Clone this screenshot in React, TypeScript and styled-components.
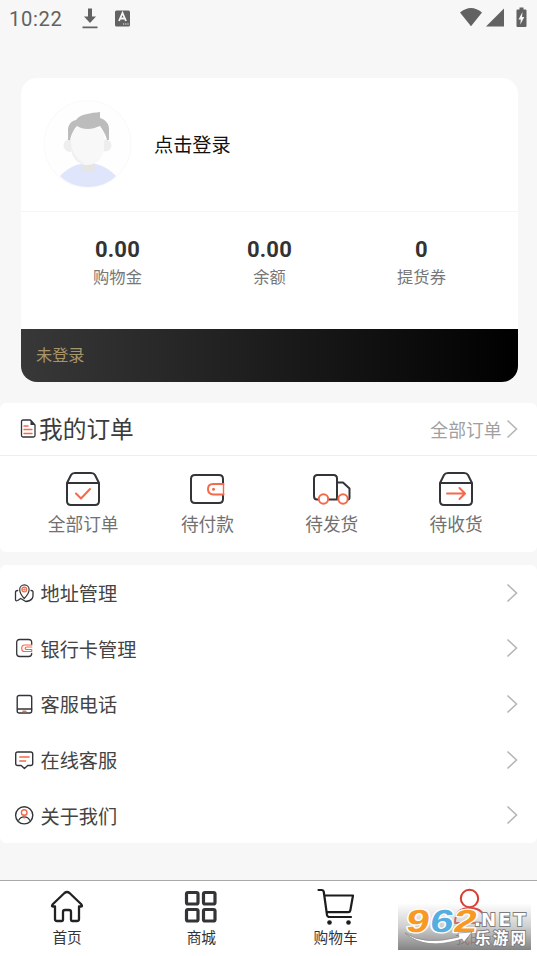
import React from "react";
import styled, { createGlobalStyle } from "styled-components";

const INK = "#333438";
const ACCENT = "#f4694a";

const GlobalStyle = createGlobalStyle`
  * { box-sizing: border-box; }
  body {
    margin: 0;
    background: #f7f7f7;
    color: #333;
    font-family: Roboto, "Noto Sans CJK SC", sans-serif;
    overflow: hidden;
  }
  svg { display: block; flex: none; overflow: visible; }
`;

const Screen = styled.div`
  width: 537px;
  height: 956px;
  display: flex;
  flex-direction: column;
  overflow: hidden;
`;

const StatusBar = styled.header`
  height: 78px;
  flex: none;
  display: flex;
  align-items: flex-start;
  padding: 7px 9px 0;
  color: #626262;
`;

const Clock = styled.span`
  font-size: 20.2px;
  line-height: 24px;
  letter-spacing: 0.65px;
  width: 72px;
`;

const StatusIcons = styled.div<{ $end?: boolean }>`
  display: flex;
  margin-left: ${(p) => (p.$end ? "auto" : "0")};
`;

const ProfileCard = styled.section`
  height: 304px;
  flex: none;
  margin: 0 19px 0 21px;
  background: #fff;
  border-radius: 16px;
  overflow: hidden;
  display: flex;
  flex-direction: column;
`;

const LoginRow = styled.div`
  height: 134px;
  flex: none;
  display: flex;
  align-items: center;
  padding: 0 0 2px 22px;
  gap: 22px;
  border-bottom: 1px solid #f5f5f5;
`;

const LoginText = styled.span`
  font-size: 19.2px;
  line-height: 24px;
  padding-top: 4px;
  color: #111;
`;

const Stats = styled.div`
  flex: 1;
  display: grid;
  grid-template-columns: repeat(3, 152px);
  padding: 24px 0 0 20.5px;
`;

const Stat = styled.div`
  display: flex;
  flex-direction: column;
  align-items: center;
`;

const StatValue = styled.strong`
  font: 700 22px/27px Roboto, sans-serif;
  letter-spacing: 0.2px;
  color: #333;
`;

const StatLabel = styled.span`
  font-size: 16.3px;
  line-height: 24px;
  margin-top: 3px;
  color: #777;
`;

const MemberBar = styled.div`
  height: 53px;
  flex: none;
  display: flex;
  align-items: center;
  padding: 0 0 4px 15px;
  background: linear-gradient(90deg, #383838, #000);
  color: #a8946a;
  font-size: 16.2px;
`;

const Panel = styled.section<{ $gap: number; $height: number }>`
  height: ${(p) => p.$height}px;
  flex: none;
  margin-top: ${(p) => p.$gap}px;
  background: #fff;
  border-radius: 6px;
  display: flex;
  flex-direction: column;
`;

const OrdersHeader = styled.div`
  height: 53px;
  flex: none;
  display: flex;
  align-items: center;
  padding: 0 19px 0 20px;
  border-bottom: 1px solid #eee;
`;

const OrdersTitle = styled.h2`
  margin: 1px auto 0 2px;
  font-size: 23.7px;
  line-height: 30px;
  font-weight: 400;
  color: #3c3c3c;
`;

const MoreLink = styled.span`
  font-size: 17.8px;
  line-height: 24px;
  margin: 4px 4.500px 0 0;
  color: #a0a0a0;
`;

const OrderTypes = styled.div`
  display: grid;
  grid-template-columns: repeat(4, 124.3px);
  padding: 14px 0 0 21px;
`;

const OrderType = styled.div`
  display: flex;
  flex-direction: column;
  align-items: center;
`;

const OrderLabel = styled.span`
  font-size: 17.7px;
  line-height: 24px;
  margin-top: 5px;
  color: #717171;
`;

const MenuRow = styled.div`
  flex: 1;
  display: flex;
  align-items: center;
  padding: 0 19px 0 15px;
`;

const MenuText = styled.span`
  font-size: 19.2px;
  line-height: 28px;
  margin: 0 auto 0 5.500px;
  padding-top: 5px;
  color: #444;
`;

const TabBar = styled.nav`
  position: relative;
  height: 76px;
  flex: none;
  margin-top: auto;
  display: grid;
  grid-template-columns: repeat(4, 1fr);
  background: #fff;
  border-top: 1px solid #a9a9a9;
`;

const Tab = styled.div<{ $active?: boolean }>`
  display: flex;
  flex-direction: column;
  align-items: center;
  padding-top: 7px;
  color: ${(p) => (p.$active ? "#d93b2f" : "#333")};
  font-size: 14.7px;
`;

const TabLabel = styled.span`
  line-height: 20px;
  margin-top: 2px;
`;

const Watermark = styled.div`
  position: absolute;
  left: 398px;
  top: 22px;
  width: 133px;
  height: 47px;
  background: linear-gradient(rgba(255, 255, 255, 0), rgba(175, 175, 175, 0.6) 50%, rgba(118, 118, 118, 0.9));
`;

const stroke = (color: string, width: number) => ({
  fill: "none",
  stroke: color,
  strokeWidth: width,
  strokeLinecap: "round" as const,
  strokeLinejoin: "round" as const,
});

const Chevron = () => (
  <svg width="12" height="20" viewBox="0 0 12 20">
    <path d="M1.500 1.500 10.500 10l-9 8.500" fill="none" stroke="#b6b6b6" strokeWidth="1.6" />
  </svg>
);

const Avatar = () => (
  <svg width="89" height="90" viewBox="0 0 89 90">
    <circle cx="44.5" cy="45" r="43.5" fill="#fefefe" stroke="#fafafa" strokeWidth="1.2" />
    <path d="M17 77c6-6 13-11 21-12h14c8 1 15 6 21 12-7 7-17 11-28 11s-21-4-28-11Z" fill="#dfe5fb" />
    <path d="M38 61h14v9c-3 4-11 4-14 0Z" fill="#e5e5e5" />
    <circle cx="27" cy="46.500" r="6.500" fill="#eeeeee" />
    <circle cx="62.500" cy="46.500" r="6" fill="#eeeeee" />
    <path d="M28 35c0-10 33-10 33 0v13c0 11-8 18-17 18-10 0-16-8-16-18Z" fill="#f8f8f8" />
    <path d="M28 44c1 10 7 17 14 21-8 0-14-8-14-17Z" fill="#f0f0f0" />
    <path d="M25 41V31c0-5 3-9 8-10 4-6 15-7 24-8v6c6 2 9 6 9 11v11h-2c-1-5-4-10-7-14-5 2-8 3-12 3-5 0-8-1-11-3-3 3-6 8-7 14Z" fill="#bcbcbc" />
  </svg>
);

const DocumentIcon = () => (
  <svg width="17" height="20" viewBox="0 0 17 20">
    <path d="M10.500 1H3Q1.500 1 1.500 2.500v14Q1.500 18 3 18h10.500Q15 18 15 16.500V6Z" {...stroke(INK, 1.3)} />
    <path d="M10.500 1v5H15Z" fill={INK} />
    <path d="M4 7h4M4 10.500h8M4 14.500h8" {...stroke(ACCENT, 1.3)} />
  </svg>
);

const BoxIcon = ({ arrow }: { arrow?: boolean }) => (
  <svg width="36" height="38" viewBox="0 0 36 38">
    <path d="M2 13v18q0 4 4 4h24q4 0 4-4V13ZM2 13l4-8q1-2 4-2h16q3 0 4 2l4 8" {...stroke(INK, 2)} />
    <path d={arrow ? "M9 23.500h18M21.500 18l5.500 5.500-5.500 5.500" : "m11 23.500 5 5L25 19"} {...stroke(ACCENT, 2)} />
  </svg>
);

const WalletIcon = () => (
  <svg width="36" height="38" viewBox="0 0 36 38">
    <path d="M34 14V9q0-4-4-4H6Q2 5 2 9v20q0 4 4 4h24q4 0 4-4v-4" {...stroke(INK, 2)} />
    <path d="M34.500 14H24q-5 0-5 5t5 5.500h10.500" {...stroke(ACCENT, 2)} />
    <path d="M34.500 14v10.500" {...stroke(ACCENT, 1.4)} />
    <circle cx="24.500" cy="19.300" r="1.500" fill={ACCENT} />
  </svg>
);

const TruckIcon = () => (
  <svg width="38" height="38" viewBox="0 0 38 38">
    <path d="M6 29.500H4Q1 29.500 1 26V8.500Q1 5 4.500 5h16Q24 5 24 8.500v21h-8M24 12.500h6l6.500 6v9q0 2-1.500 2" {...stroke(INK, 2)} />
    <circle cx="10.500" cy="29" r="4.700" fill="#fff" stroke={ACCENT} strokeWidth="2" />
    <circle cx="30" cy="29" r="4.700" fill="#fff" stroke={ACCENT} strokeWidth="2" />
  </svg>
);

const menuDrawings: Record<string, React.ReactNode> = {
  address: (
    <>
      <path d="M3 7Q.8 7 .8 9v7q.2 2 2.200 1l3-2 5 3q4 0 6.500-3 .8-1 .8-3V8q0-1-2-1" {...stroke(INK, 1.3)} />
      <path d="M9.500 15Q5 10 5 6a4.700 4.700 0 0 1 9.400 0q0 4-4.900 9Z" {...stroke(INK, 1.2)} fill="#fff" />
      <circle cx="9.600" cy="6" r="2.400" {...stroke(ACCENT, 1.2)} />
      <path d="M8 6h3M9.600 4.500v3" {...stroke(ACCENT, 0.7)} />
    </>
  ),
  card: (
    <>
      <path d="M17 6V4q0-3-3-3H5Q2 1 2 4v11q0 3 3 3h9q3 0 3-3" {...stroke(INK, 1.3)} />
      <path d="M17 6.500h-7q-3 0-3 3.300t3 3.200h7V11M17 8.500h-5q-1.500 0-1.500 1.300T12 11h5" {...stroke(ACCENT, 1.2)} />
    </>
  ),
  phone: (
    <>
      <rect x="2.500" y="1" width="14.500" height="17.500" rx="2" {...stroke(INK, 1.4)} />
      <path d="M3 14.500h14" {...stroke(INK, 1.3)} />
      <path d="M8.500 16.800h2.500" {...stroke(ACCENT, 1.8)} />
    </>
  ),
  chat: (
    <>
      <path d="M3 1.500h13q2 0 2 2v9.500q0 2-2 2h-3L9.700 18 6.500 15H3q-2 0-2-2V3.500q0-2 2-2Z" {...stroke(INK, 1.4)} />
      <path d="M5 6.500h9.500M5 10.500h6" {...stroke(ACCENT, 1.3)} />
    </>
  ),
  about: (
    <>
      <circle cx="9.500" cy="9.800" r="8.600" {...stroke(INK, 1.4)} />
      <circle cx="9.500" cy="7" r="2.800" {...stroke(ACCENT, 1.4)} />
      <path d="M4 14.800q1.500-3.500 5.500-3.500t5.500 3.500" {...stroke(INK, 1.2)} />
      <path d="M9.500 9.800v3" {...stroke(ACCENT, 1)} />
    </>
  ),
};

const MenuIcon = ({ name }: { name: string }) => (
  <svg width="20" height="20" viewBox="0.3 -0.5 20 20">{menuDrawings[name]}</svg>
);

const HomeIcon = () => (
  <svg width="34" height="38" viewBox="0 0 34 38">
    <path d="M5 18.500H3Q1 18.500 3 16L14.500 5q2.500-2 5 0L31 16q2 2.500 0 2.500h-2V31q0 2-2 2h-5q-1 0-1-1v-8q0-2-2-2h-4q-2 0-2 2v8q0 1-1 1H7q-2 0-2-2Z" {...stroke("#222", 2.3)} />
  </svg>
);

const MallIcon = () => (
  <svg width="34" height="38" viewBox="0 0 34 38">
    {[[2.500, 4.500], [19.500, 4.500], [2.500, 21.500], [19.500, 21.500]].map(([x, y]) => (
      <rect key={`${x}-${y}`} x={x} y={y} width="11.500" height="11.500" rx="1.500" {...stroke(INK, 3.2)} />
    ))}
  </svg>
);

const CartIcon = () => (
  <svg width="38" height="38" viewBox="0 0 38 38">
    <path d="M1.500 2h3q2 0 2.300 2L10 27q.5 2 2.500 2H34M7.500 7.500H36l-2.700 15q-.3 1.700-2 1.700H10" {...stroke("#1c1c1c", 2.2)} />
    <circle cx="12.500" cy="34.500" r="2.300" fill="#1c1c1c" />
    <circle cx="31.500" cy="34.500" r="2.300" fill="#1c1c1c" />
  </svg>
);

const PersonIcon = () => (
  <svg width="34" height="38" viewBox="0 0 34 38">
    <circle cx="16.500" cy="10.500" r="8.700" {...stroke("#d93b2f", 2)} />
    <path d="M2 35q0-15 15-15t15 15Z" {...stroke("#d93b2f", 2)} />
  </svg>
);

const digits = [
  { x: 7, char: "9", color: "#f79a25" },
  { x: 31, char: "6", color: "#55aee0" },
  { x: 54.500, char: "2", color: "#f79a25" },
];

const netLetters = [
  { x: 76, char: "." },
  { x: 83, char: "N" },
  { x: 100.500, char: "E" },
  { x: 115.500, char: "T" },
];

const WatermarkArt = () => (
  <svg width="133" height="47" viewBox="0 0 133 47">
    {digits.map(({ x, char, color }) => (
      <text
        key={char}
        transform={`translate(${x} 29) skewX(-9) scale(1.3 1)`}
        fontFamily="Liberation Sans, sans-serif"
        fontWeight="700"
        fontSize="32"
        paintOrder="stroke"
        stroke="#fff"
        strokeWidth="2.500"
        strokeLinejoin="round"
        fill={color}
      >
        {char}
      </text>
    ))}
    <g fill="#fff" stroke="#7d7d7d" strokeWidth="1.800" paintOrder="stroke" fontWeight="700">
      {netLetters.map(({ x, char }) => (
        <text key={char} x={x} y="23" fontFamily="DejaVu Sans, sans-serif" fontSize="18">{char}</text>
      ))}
      <text x="77" y="41" fontFamily="Noto Sans CJK SC, sans-serif" fontSize="15.500" textLength="51">乐游网</text>
    </g>
    <path d="M7 30q19 13 54 4l-1-4 14-1-8 10-2-3Q27 48 7 30Z" fill="#fff" stroke="#888" strokeWidth=".7" />
  </svg>
);

const stats = [["0.00", "购物金"], ["0.00", "余额"], ["0", "提货券"]];
const orders = [
  { label: "全部订单", icon: <BoxIcon /> },
  { label: "待付款", icon: <WalletIcon /> },
  { label: "待发货", icon: <TruckIcon /> },
  { label: "待收货", icon: <BoxIcon arrow /> },
];
const menu = [
  ["address", "地址管理"],
  ["card", "银行卡管理"],
  ["phone", "客服电话"],
  ["chat", "在线客服"],
  ["about", "关于我们"],
];

export default function App() {
  return (
    <Screen>
      <GlobalStyle />
      <StatusBar>
        <Clock>10:22</Clock>
        <StatusIcons>
          <svg width="50" height="24" viewBox="0 0 50 24" fill="#626262">
            <path d="M7 1.500h4v8h4l-6 6.500-6-6.500h4ZM1.500 19.500h15v1.700h-15Z" />
            <rect x="34" y="3.500" width="15" height="16" rx="1.500" />
            <path d="m38 14 3.500-8L45 14M39.500 11.500h4" fill="none" stroke="#f7f7f7" strokeWidth="1.800" />
            <path d="M42 17h1.200m1 0h1.200m1 0h1.200" stroke="#f7f7f7" />
          </svg>
        </StatusIcons>
        <StatusIcons $end>
          <svg width="69" height="24" viewBox="0 0 69 24" fill="#626262">
            <path d="M1 5.500q11-9 22 0L12 19.200ZM27 19.500 45 1.500v18ZM58.500 2.500h2V.5h4v2h2q1 0 1 1V19q0 1-1 1h-8q-1 0-1-1V3.500q0-1 1-1Z" />
            <path d="m63.500 5-4 7.500h2.300l-.5 5 4-7.500H63Z" fill="#f7f7f7" />
          </svg>
        </StatusIcons>
      </StatusBar>
      <ProfileCard>
        <LoginRow>
          <Avatar />
          <LoginText>点击登录</LoginText>
        </LoginRow>
        <Stats>
          {stats.map(([value, label]) => (
            <Stat key={label}>
              <StatValue>{value}</StatValue>
              <StatLabel>{label}</StatLabel>
            </Stat>
          ))}
        </Stats>
        <MemberBar>未登录</MemberBar>
      </ProfileCard>
      <Panel $gap={21} $height={149}>
        <OrdersHeader>
          <DocumentIcon />
          <OrdersTitle>我的订单</OrdersTitle>
          <MoreLink>全部订单</MoreLink>
          <Chevron />
        </OrdersHeader>
        <OrderTypes>
          {orders.map(({ label, icon }) => (
            <OrderType key={label}>
              {icon}
              <OrderLabel>{label}</OrderLabel>
            </OrderType>
          ))}
        </OrderTypes>
      </Panel>
      <Panel $gap={13} $height={278}>
        {menu.map(([name, label]) => (
          <MenuRow key={name}>
            <MenuIcon name={name} />
            <MenuText>{label}</MenuText>
            <Chevron />
          </MenuRow>
        ))}
      </Panel>
      <TabBar>
        <Tab><HomeIcon /><TabLabel>首页</TabLabel></Tab>
        <Tab><MallIcon /><TabLabel>商城</TabLabel></Tab>
        <Tab><CartIcon /><TabLabel>购物车</TabLabel></Tab>
        <Tab $active><PersonIcon /><TabLabel>我的</TabLabel></Tab>
        <Watermark><WatermarkArt /></Watermark>
      </TabBar>
    </Screen>
  );
}
